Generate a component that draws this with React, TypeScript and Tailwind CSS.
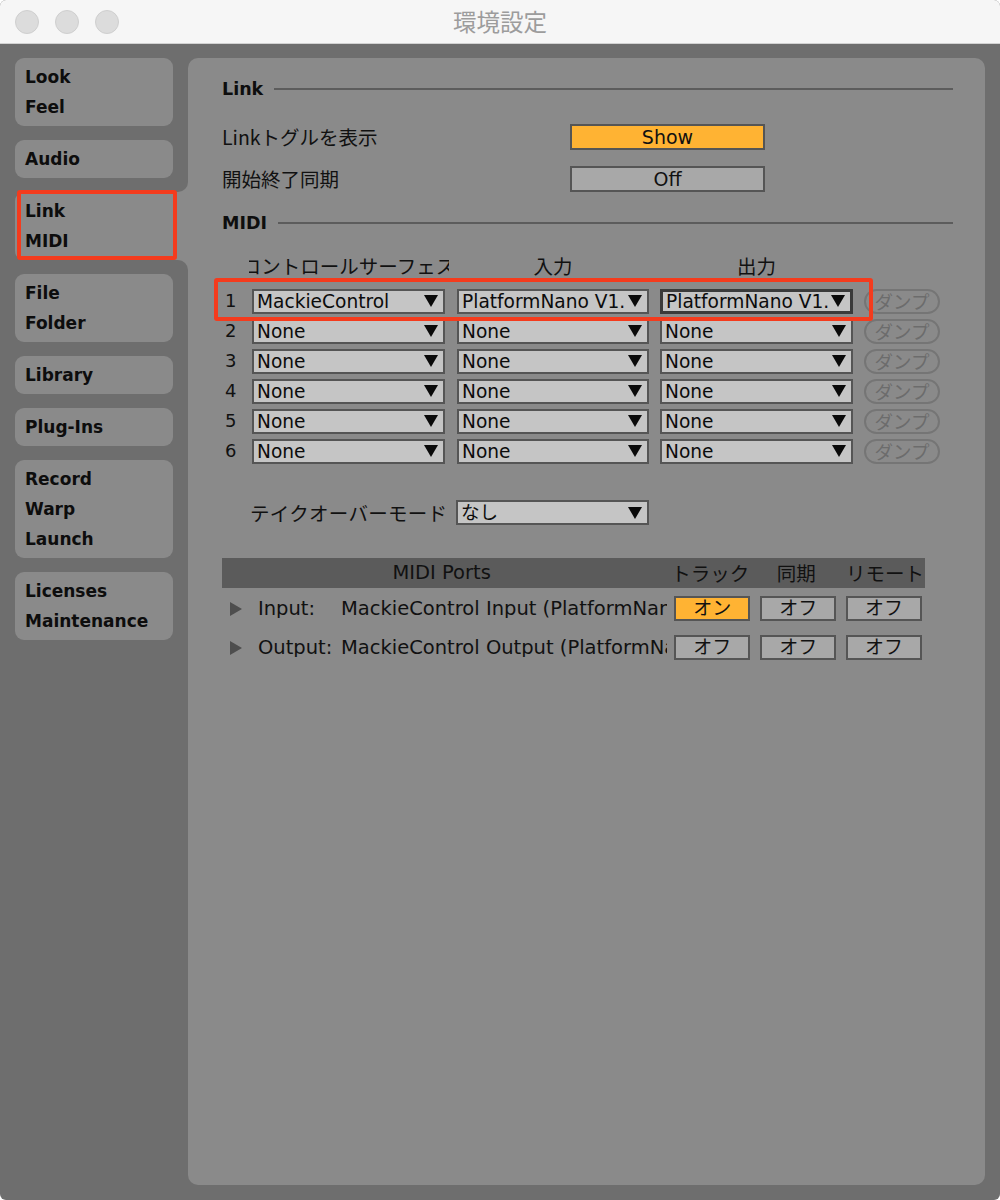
import React from 'react';

const LATIN = "font-['DejaVu_Sans','Noto_Sans_CJK_JP',sans-serif]";
const JP = "font-['Noto_Sans_CJK_JP',sans-serif]";

type Tab = { lines: string[]; active?: boolean };

const TABS: Tab[] = [
  { lines: ['Look', 'Feel'] },
  { lines: ['Audio'] },
  { lines: ['Link', 'MIDI'], active: true },
  { lines: ['File', 'Folder'] },
  { lines: ['Library'] },
  { lines: ['Plug-Ins'] },
  { lines: ['Record', 'Warp', 'Launch'] },
  { lines: ['Licenses', 'Maintenance'] },
];

const SURFACES = [
  { surface: 'MackieControl', input: 'PlatformNano V1.', output: 'PlatformNano V1.' },
  { surface: 'None', input: 'None', output: 'None' },
  { surface: 'None', input: 'None', output: 'None' },
  { surface: 'None', input: 'None', output: 'None' },
  { surface: 'None', input: 'None', output: 'None' },
  { surface: 'None', input: 'None', output: 'None' },
];

function Arrow() {
  return (
    <svg width="14" height="12" viewBox="0 0 14 12" className="shrink-0">
      <polygon points="0,0 14,0 7,12" fill="#0a0a0a" />
    </svg>
  );
}

function Dropdown({ value, width, focused }: { value: string; width: string; focused?: boolean }) {
  return (
    <div
      className={`${width} flex h-[25px] shrink-0 items-center bg-[#c5c5c5] pl-[3px] pr-[5px] ${
        focused ? 'border-[3px] border-[#3a3a3a]' : 'border-2 border-[#555555]'
      }`}
    >
      <span
        className={`${LATIN} min-w-0 flex-1 overflow-hidden whitespace-nowrap pt-[2px] text-[18.6px] leading-none text-[#0c0c0c]`}
      >
        {value}
      </span>
      <Arrow />
    </div>
  );
}

function Toggle({ label, on, width, height }: { label: string; on?: boolean; width: string; height: string }) {
  return (
    <div
      className={`${LATIN} ${width} ${height} flex items-center justify-center border-2 border-[#555555] text-[19px] leading-none text-[#111] ${
        on ? 'bg-[#ffb333]' : 'bg-[#a8a8a8]'
      }`}
    >
      {label}
    </div>
  );
}

function SectionHeading({ title }: { title: string }) {
  return (
    <div className="flex h-[30px] items-center gap-[11px]">
      <span className={`${LATIN} text-[17.5px] font-bold text-[#0e0e0e]`}>{title}</span>
      <div className="h-[2px] flex-1 bg-[#5c5c5c]" />
    </div>
  );
}

function Sidebar() {
  return (
    <div className="flex w-[188px] shrink-0 flex-col gap-[14px] pl-[15px]">
      {TABS.map((tab) => (
        <div
          key={tab.lines[0]}
          className={`relative bg-[#8a8a8a] py-[4px] pl-[10px] ${tab.active ? 'rounded-l-[9px]' : 'mr-[15px] rounded-[9px]'}`}
        >
          {tab.lines.map((line) => (
            <div key={line} className={`${LATIN} text-[17px] font-bold leading-[30px] text-[#0d0d0d]`}>
              {line}
            </div>
          ))}
          {tab.active && (
            <>
              {/* concave corners where the tab joins the panel */}
              <span className="absolute right-0 top-[-10px] h-[10px] w-[10px] bg-[#8a8a8a]">
                <span className="block h-full w-full rounded-br-[10px] bg-[#6e6e6e]" />
              </span>
              <span className="absolute bottom-[-10px] right-0 h-[10px] w-[10px] bg-[#8a8a8a]">
                <span className="block h-full w-full rounded-tr-[10px] bg-[#6e6e6e]" />
              </span>
              <span className="absolute left-[2px] top-[-2px] h-[70px] w-[160px] rounded-[3px] border-[4px] border-[#f43b1d]" />
            </>
          )}
        </div>
      ))}
    </div>
  );
}

function MidiPortRow({
  kind,
  name,
  states,
  className,
}: {
  kind: string;
  name: string;
  states: boolean[];
  className: string;
}) {
  return (
    <div className={`flex h-[25px] items-center ${className}`}>
      <div className="flex w-[446px] items-center overflow-hidden whitespace-nowrap">
        <svg width="12" height="14" viewBox="0 0 12 14" className="ml-[8px] shrink-0">
          <polygon points="0,0 12,7 0,14" fill="#4e4e4e" />
        </svg>
        <span className={`${LATIN} ml-[16px] w-[83px] shrink-0 text-[19.5px] leading-none text-[#111]`}>{kind}</span>
        <span className={`${LATIN} text-[19.5px] leading-none text-[#111]`}>{name}</span>
      </div>
      {states.map((on, i) => (
        <div key={i} className="flex w-[86px] justify-start pl-[7px]">
          <Toggle label={on ? 'オン' : 'オフ'} on={on} width="w-[76px]" height="h-[25px]" />
        </div>
      ))}
    </div>
  );
}

function Panel() {
  return (
    <div className={`${JP} min-w-0 flex-1 rounded-[10px] bg-[#8a8a8a] pl-[34px] pr-[32px] pt-[16px]`}>
      <SectionHeading title="Link" />

      <div className="mt-[20px] flex h-[26px] items-center">
        <span className="w-[348px] text-[19.5px] leading-none text-[#111]">Linkトグルを表示</span>
        <Toggle label="Show" on width="w-[195px]" height="h-[26px]" />
      </div>
      <div className="mt-[16px] flex h-[26px] items-center">
        <span className="w-[348px] text-[19.5px] leading-none text-[#111]">開始終了同期</span>
        <Toggle label="Off" width="w-[195px]" height="h-[26px]" />
      </div>

      <div className="mt-[16px]">
        <SectionHeading title="MIDI" />
      </div>

      <div className="relative pt-[13px]">
        {/* column titles */}
        <div className="flex h-[30px] items-center text-[19.5px] text-[#111]">
          <div className="w-[27px] shrink-0" />
          <div className="w-[200px] shrink-0 overflow-hidden whitespace-nowrap">
            <div className="ml-[-8px] w-[215px] text-center">コントロールサーフェス</div>
          </div>
          <div className="ml-[8px] w-[192px] shrink-0 text-center">入力</div>
          <div className="ml-[11px] w-[193px] shrink-0 text-center">出力</div>
        </div>

        <div className="mt-[5px] flex flex-col">
          {SURFACES.map((row, i) => (
            <div key={i} className="flex h-[30px] items-center">
              <span className={`${LATIN} w-[30px] shrink-0 pl-[3px] text-[18px] leading-none text-[#111]`}>{i + 1}</span>
              <Dropdown value={row.surface} width="w-[193px]" />
              <div className="ml-[12px]">
                <Dropdown value={row.input} width="w-[192px]" />
              </div>
              <div className="ml-[11px]">
                <Dropdown value={row.output} width="w-[193px]" focused={i === 0} />
              </div>
              <div className="ml-[11px] flex h-[25px] w-[76px] items-center justify-center rounded-full border-2 border-[#757575] text-[18.5px] leading-none text-[#6c6c6c]">
                ダンプ
              </div>
            </div>
          ))}
        </div>

        <span className="absolute left-[-8px] top-[40px] h-[43px] w-[659px] rounded-[3px] border-[4px] border-[#f43b1d]" />
      </div>

      <div className="mt-[34px] flex h-[25px] items-center">
        <span className="w-[234px] pl-[28px] text-[19.5px] leading-none tracking-[0.3px] text-[#111]">テイクオーバーモード</span>
        <Dropdown value="なし" width="w-[193px]" />
      </div>

      <div className="mt-[33px] w-[703px]">
        <div className="flex h-[30px] items-center overflow-hidden whitespace-nowrap bg-[#5b5b5b] text-[19.5px] leading-none text-[#111]">
          <div className={`${LATIN} w-[440px] text-center`}>MIDI Ports</div>
          <div className="w-[92px] pl-[6px] text-center">トラック</div>
          <div className="w-[86px] text-center">同期</div>
          <div className="w-[86px] pl-[6px] text-center">リモート</div>
        </div>
        <MidiPortRow
          kind="Input:"
          name="MackieControl Input (PlatformNano V1.)"
          states={[true, false, false]}
          className="mt-[8px]"
        />
        <MidiPortRow
          kind="Output:"
          name="MackieControl Output (PlatformNano V1.)"
          states={[false, false, false]}
          className="mt-[14px]"
        />
      </div>
    </div>
  );
}

export default function App() {
  return (
    <div className="h-[1200px] w-[1000px] bg-white">
      <div className="flex h-full flex-col overflow-hidden rounded-[6px] bg-[#6e6e6e]">
        <div className="relative flex h-[44px] shrink-0 items-center justify-center border-b border-[#d2d2d2] bg-[#f6f6f6]">
          <div className="absolute left-[15px] top-[10px] flex gap-[16px]">
            {[0, 1, 2].map((i) => (
              <span key={i} className="h-[24px] w-[24px] rounded-full border border-[#cfcfcf] bg-[#dcdcdc]" />
            ))}
          </div>
          <span className={`${JP} text-[23.5px] text-[#9c9c9c]`}>環境設定</span>
        </div>
        <div className="flex min-h-0 flex-1 pb-[15px] pr-[15px] pt-[14px]">
          <Sidebar />
          <Panel />
        </div>
      </div>
    </div>
  );
}
